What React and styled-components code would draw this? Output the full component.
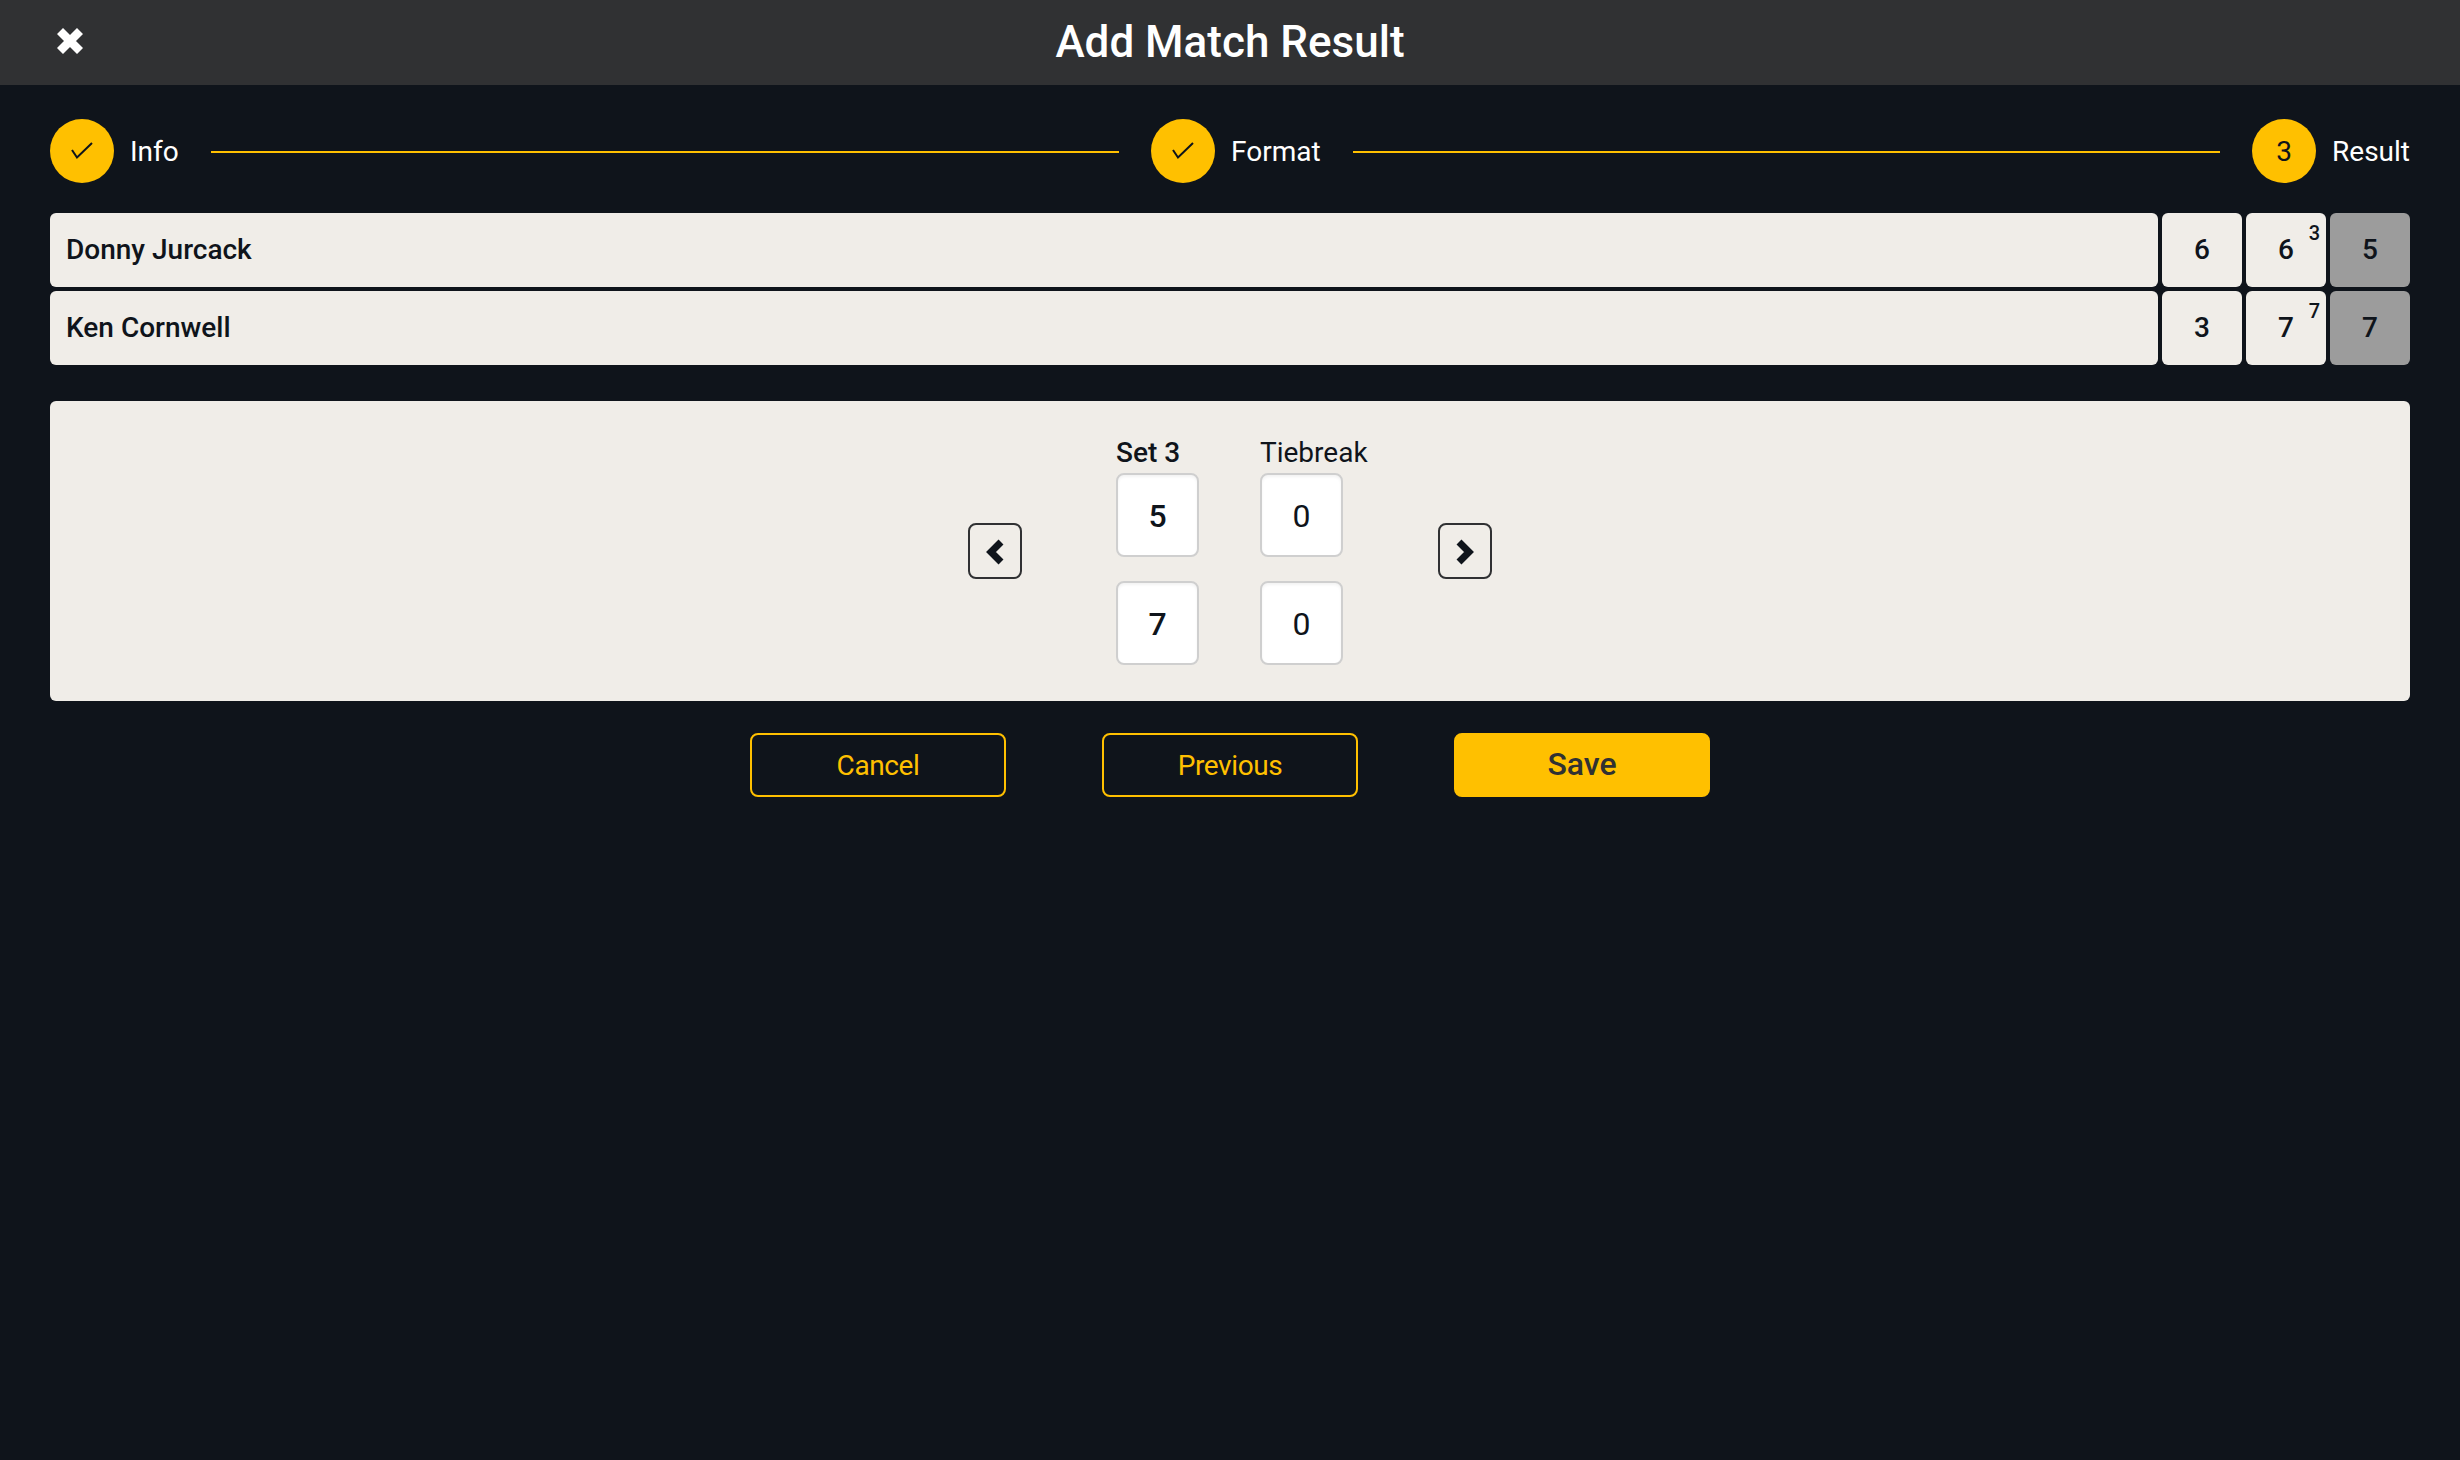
import React from "react";
import styled, { createGlobalStyle } from "styled-components";

const Global = createGlobalStyle`
  html, body { margin: 0; padding: 0; background: #0f141b; }
  body { font-family: Roboto, "Liberation Sans", sans-serif; }
  * { box-sizing: border-box; }
`;

const Page = styled.div`
  width: 100%;
  min-height: 1460px;
  background: #0f141b;
  display: flex;
  flex-direction: column;
`;
const Header = styled.header`
  height: 85px;
  background: #303133;
  position: relative;
  display: flex;
  align-items: center;
  justify-content: center;
`;
const CloseButton = styled.button`
  position: absolute;
  left: 57px;
  top: 28px;
  width: 26px;
  height: 26px;
  padding: 0;
  border: 0;
  background: none;
  display: flex;
`;
const Title = styled.h1`
  margin: 0 0 1px;
  font-size: 44px;
  font-weight: 500;
  color: #fff;
`;
const Content = styled.main`
  padding: 34px 50px 0;
  display: flex;
  flex-direction: column;
`;
const Stepper = styled.div`
  display: flex;
  align-items: center;
  height: 64px;
`;
const Step = styled.div`
  display: flex;
  align-items: center;
  flex: ${(p) => (p.$last ? "0 0 auto" : "1 1 0")};
`;
const Circle = styled.div`
  width: 64px;
  height: 64px;
  border-radius: 50%;
  background: #ffc000;
  color: #0f141b;
  font-size: 28px;
  display: flex;
  align-items: center;
  justify-content: center;
  flex: none;
`;
const StepLabel = styled.span`
  margin-left: 16px;
  font-size: 28px;
  color: #fff;
`;
const Line = styled.div`
  flex: 1;
  height: 2px;
  margin: 1px 32px 0;
  background: #ffc000;
`;
const Scores = styled.div`
  margin-top: 30px;
  display: flex;
  flex-direction: column;
  gap: 4px;
`;
const ScoreRow = styled.div`
  display: flex;
  gap: 4px;
  height: 74px;
`;
const NameCell = styled.div`
  flex: 1;
  background: #f0ede8;
  border-radius: 6px;
  padding: 0 16px 2px;
  display: flex;
  align-items: center;
  font-size: 28px;
  font-weight: 500;
  color: #0f141b;
`;
const ScoreCell = styled.div`
  width: 80px;
  background: ${(p) => (p.$current ? "#9c9c9c" : "#f0ede8")};
  border-radius: 6px;
  padding-bottom: 2px;
  position: relative;
  display: flex;
  align-items: center;
  justify-content: center;
  font-size: 28px;
  font-weight: 500;
  color: #0f141b;
`;
const Tiebreak = styled.sup`
  position: absolute;
  top: 8px;
  right: 6px;
  font-size: 20px;
  line-height: 24px;
  font-weight: 500;
`;
const Panel = styled.section`
  margin-top: 36px;
  height: 300px;
  background: #f0ede8;
  border-radius: 6px;
  padding: 36px 0;
  display: flex;
  align-items: center;
  justify-content: center;
`;
const ArrowButton = styled.button`
  width: 54px;
  height: 56px;
  padding: 2px 0 0;
  background: transparent;
  border: 2px solid #303133;
  border-radius: 8px;
  display: flex;
  align-items: center;
  justify-content: center;
`;
const Columns = styled.div`
  display: flex;
  gap: 61px;
  margin: 0 95px 0 94px;
`;
const Column = styled.div`
  width: 83px;
  display: flex;
  flex-direction: column;
`;
const ColumnLabel = styled.div`
  height: 36px;
  line-height: 31px;
  font-size: 28px;
  font-weight: ${(p) => (p.$active ? 500 : 400)};
  color: #0f141b;
  white-space: nowrap;
`;
const ScoreInput = styled.div`
  width: 83px;
  height: 84px;
  padding-top: 2px;
  background: #fff;
  border: 2px solid #cfcfcf;
  border-radius: 8px;
  box-shadow: inset 0 2px 3px rgba(0, 0, 0, 0.05);
  display: flex;
  align-items: center;
  justify-content: center;
  font-size: 32px;
  font-weight: ${(p) => (p.$active ? 500 : 400)};
  color: #0f141b;
  & + & { margin-top: 24px; }
`;
const Actions = styled.div`
  margin-top: 32px;
  display: flex;
  justify-content: center;
  gap: 96px;
`;
const ActionButton = styled.button`
  width: 256px;
  height: 64px;
  padding: 0 0 ${(p) => (p.$primary ? "2px" : "0")};
  border-radius: 8px;
  border: 2px solid #ffc000;
  font-family: inherit;
  background: ${(p) => (p.$primary ? "#ffc000" : "transparent")};
  color: ${(p) => (p.$primary ? "#303133" : "#ffc000")};
  font-size: ${(p) => (p.$primary ? "32px" : "28px")};
  font-weight: ${(p) => (p.$primary ? 500 : 400)};
  letter-spacing: ${(p) => (p.$primary ? "0" : "-0.4px")};
`;

const Check = () => (
  <svg width="22" height="18" viewBox="0 0 22 18" fill="none" stroke="#0f141b" strokeWidth="2">
    <path d="M1 8 L6 15.5 L21 1" />
  </svg>
);

const CloseIcon = () => (
  <svg width="26" height="26" viewBox="0 0 26 26" fill="none" stroke="#fff" strokeWidth="8.5">
    <path d="M3 3 L23 23 M23 3 L3 23" />
  </svg>
);

const Chevron = ({ right }) => (
  <svg width="18" height="26" viewBox="0 0 18 26" fill="none" stroke="#0f141b" strokeWidth="7">
    <path d={right ? "M3 3 L13 13 L3 23" : "M15 3 L5 13 L15 23"} />
  </svg>
);

const players = [
  { name: "Donny Jurcack", sets: ["6", "6", "5"], tb: "3" },
  { name: "Ken Cornwell", sets: ["3", "7", "7"], tb: "7" },
];

export default function App() {
  return (
    <Page>
      <Global />
      <Header>
        <CloseButton aria-label="Close"><CloseIcon /></CloseButton>
        <Title>Add Match Result</Title>
      </Header>
      <Content>
        <Stepper>
          <Step>
            <Circle><Check /></Circle>
            <StepLabel>Info</StepLabel>
            <Line />
          </Step>
          <Step>
            <Circle><Check /></Circle>
            <StepLabel>Format</StepLabel>
            <Line />
          </Step>
          <Step $last>
            <Circle>3</Circle>
            <StepLabel>Result</StepLabel>
          </Step>
        </Stepper>
        <Scores>
          {players.map((p) => (
            <ScoreRow key={p.name}>
              <NameCell>{p.name}</NameCell>
              <ScoreCell>{p.sets[0]}</ScoreCell>
              <ScoreCell>{p.sets[1]}<Tiebreak>{p.tb}</Tiebreak></ScoreCell>
              <ScoreCell $current>{p.sets[2]}</ScoreCell>
            </ScoreRow>
          ))}
        </Scores>
        <Panel>
          <ArrowButton aria-label="Previous set"><Chevron /></ArrowButton>
          <Columns>
            <Column>
              <ColumnLabel $active>Set 3</ColumnLabel>
              <ScoreInput $active>5</ScoreInput>
              <ScoreInput $active>7</ScoreInput>
            </Column>
            <Column>
              <ColumnLabel>Tiebreak</ColumnLabel>
              <ScoreInput>0</ScoreInput>
              <ScoreInput>0</ScoreInput>
            </Column>
          </Columns>
          <ArrowButton aria-label="Next set"><Chevron right /></ArrowButton>
        </Panel>
        <Actions>
          <ActionButton>Cancel</ActionButton>
          <ActionButton>Previous</ActionButton>
          <ActionButton $primary>Save</ActionButton>
        </Actions>
      </Content>
    </Page>
  );
}
